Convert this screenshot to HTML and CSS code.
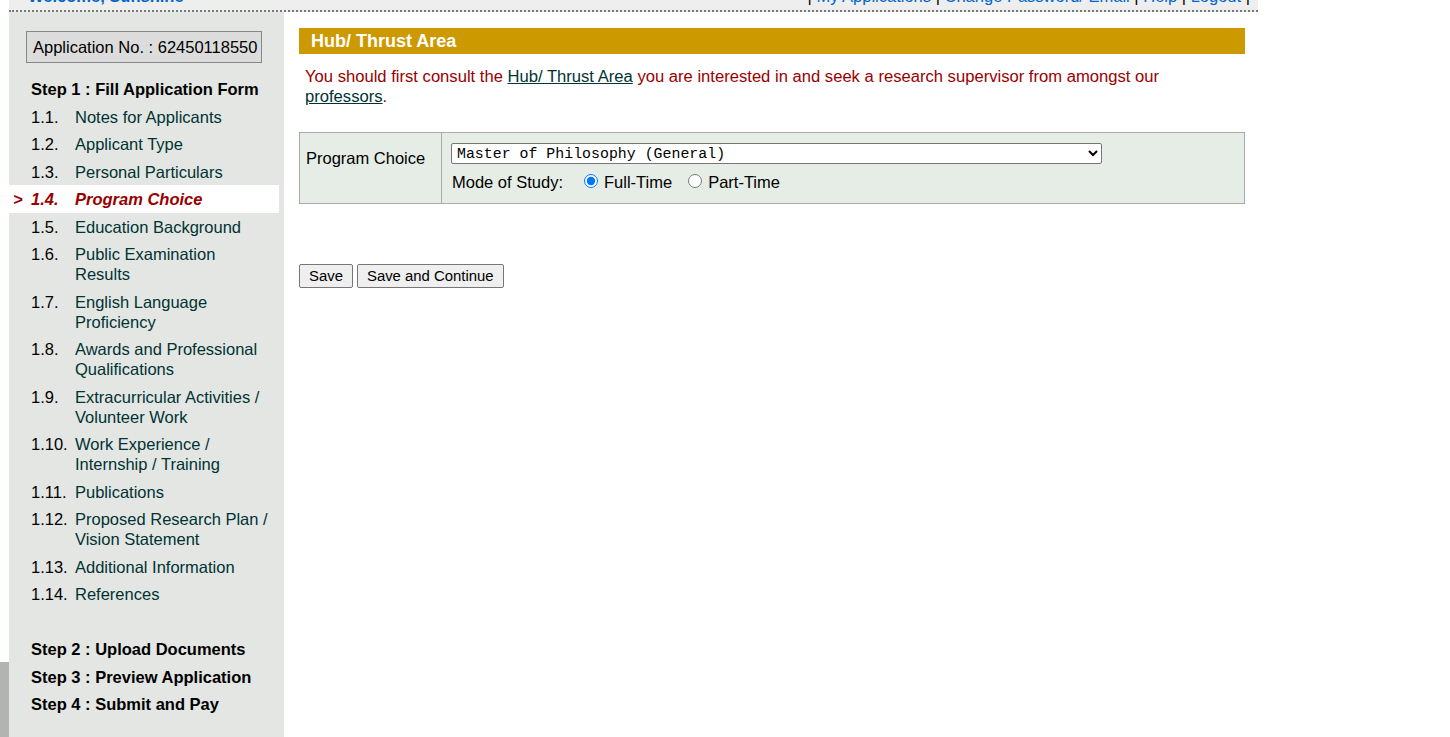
FILE: index.html
```html
<!DOCTYPE html>
<html lang="en">
<head>
<meta charset="utf-8">
<title>Program Choice</title>
<link rel="stylesheet" href="styles.css">
</head>
<body>
<div class="page">
  <div class="topbar">
    <span class="welcome">Welcome, Sunshine</span>
    <span class="toplinks">| <a href="#">My Applications</a> | <a href="#">Change Password/ Email</a> | <a href="#">Help</a> | <a href="#">Logout</a> |</span>
  </div>
  <div class="layout">
    <aside class="sidebar">
      <div class="appno">Application No. : 62450118550</div>
      <ul class="steps">
        <li class="step">Step 1 : Fill Application Form</li>
        <li class="item"><span class="mk"></span><span class="num">1.1.</span><a href="#">Notes for Applicants</a></li>
        <li class="item"><span class="mk"></span><span class="num">1.2.</span><a href="#">Applicant Type</a></li>
        <li class="item"><span class="mk"></span><span class="num">1.3.</span><a href="#">Personal Particulars</a></li>
        <li class="item active"><span class="mk">&gt;</span><span class="num">1.4.</span><a href="#">Program Choice</a></li>
        <li class="item"><span class="mk"></span><span class="num">1.5.</span><a href="#">Education Background</a></li>
        <li class="item"><span class="mk"></span><span class="num">1.6.</span><a href="#">Public Examination Results</a></li>
        <li class="item"><span class="mk"></span><span class="num">1.7.</span><a href="#">English Language Proficiency</a></li>
        <li class="item"><span class="mk"></span><span class="num">1.8.</span><a href="#">Awards and Professional Qualifications</a></li>
        <li class="item"><span class="mk"></span><span class="num">1.9.</span><a href="#">Extracurricular Activities / Volunteer Work</a></li>
        <li class="item"><span class="mk"></span><span class="num">1.10.</span><a href="#">Work Experience / Internship / Training</a></li>
        <li class="item"><span class="mk"></span><span class="num">1.11.</span><a href="#">Publications</a></li>
        <li class="item"><span class="mk"></span><span class="num">1.12.</span><a href="#">Proposed Research Plan / Vision Statement</a></li>
        <li class="item"><span class="mk"></span><span class="num">1.13.</span><a href="#">Additional Information</a></li>
        <li class="item"><span class="mk"></span><span class="num">1.14.</span><a href="#">References</a></li>
        <li class="spacer"></li>
        <li class="step">Step 2 : Upload Documents</li>
        <li class="step">Step 3 : Preview Application</li>
        <li class="step">Step 4 : Submit and Pay</li>
      </ul>
    </aside>
    <main class="main">
      <h1 class="title">Hub/ Thrust Area</h1>
      <p class="intro">You should first consult the <a href="#">Hub/ Thrust Area</a> you are interested in and seek a research supervisor from amongst our <a href="#">professors</a>.</p>
      <table class="form">
        <tr>
          <td class="label">Program Choice</td>
          <td class="field">
            <select class="prog">
              <option>Master of Philosophy (General)</option>
            </select>
            <div class="mode">
              <span class="mode-label">Mode of Study:</span>
              <label class="opt"><input type="radio" name="mode" checked>Full-Time</label>
              <label class="opt"><input type="radio" name="mode">Part-Time</label>
            </div>
          </td>
        </tr>
      </table>
      <div class="actions">
        <button type="button" class="btn">Save</button>
        <button type="button" class="btn">Save and Continue</button>
      </div>
    </main>
  </div>
</div>
</body>
</html>
```

FILE: styles.css
```css
html, body {
  margin: 0;
  padding: 0;
}
body {
  font-family: "Liberation Sans", Arial, sans-serif;
  font-size: 16.5px;
  color: #000;
  background: #fff linear-gradient(#b3b3b3, #b3b3b3) no-repeat 0 662px / 9px 100px;
  height: 737px;
  overflow: hidden;
}
a {
  color: #003333;
}
.page {
  margin-left: 9px;
  width: 1249px;
}
.topbar {
  margin-top: -14px;
  height: 24px;
  line-height: 20px;
  background: #eeeeee;
  border-bottom: 2px dotted #777;
  display: flex;
  justify-content: space-between;
  padding: 0 8px 0 19px;
  box-sizing: content-box;
}
.welcome {
  color: #0066cc;
  font-weight: bold;
}
.toplinks a {
  color: #0066cc;
  text-decoration: none;
}
.layout {
  display: flex;
  align-items: stretch;
}
.sidebar {
  width: 275px;
  flex: none;
  background: #e4e6e3;
  padding: 19px 0 30px;
  min-height: 690px;
  box-sizing: border-box;
}
.appno {
  margin-left: 17px;
  width: 236px;
  height: 32px;
  box-sizing: border-box;
  border: 1px solid #888;
  background: #dcdcdc;
  line-height: 30px;
  padding-left: 6px;
  white-space: nowrap;
}
.steps {
  list-style: none;
  margin: 12px 0 0;
  padding: 0;
}
.steps li {
  line-height: 20px;
  padding: 4px 0 3.5px;
}
.step {
  font-weight: bold;
  padding-left: 22px !important;
}
.item {
  display: grid;
  grid-template-columns: 18px 44px 197px;
  padding-left: 4px !important;
  width: 270px;
  box-sizing: border-box;
}
.item a {
  text-decoration: none;
  color: #003333;
}
.item.active {
  background: #fff;
  color: #990000;
  font-weight: bold;
  font-style: italic;
}
.item.active a {
  color: #990000;
}
.spacer {
  height: 20px;
}
.main {
  flex: 1;
  padding: 16px 13px 0 15px;
}
.title {
  margin: 0;
  background: #cc9900;
  color: #fff;
  font-size: 18px;
  font-weight: bold;
  height: 26px;
  line-height: 26px;
  padding-left: 12px;
}
.intro {
  margin: 13px 0 0;
  padding-left: 6px;
  padding-right: 60px;
  line-height: 20px;
  font-size: 16.63px;
  color: #990000;
}
.form {
  margin-top: 25px;
  width: 946px;
  border-collapse: collapse;
  border: 1px solid #aaa;
  background: #e6ede6;
}
.form td {
  vertical-align: top;
}
.label {
  width: 142px;
  box-sizing: border-box;
  padding: 15px 6px 0;
  line-height: 20px;
  border-right: 1px solid #aaa;
}
.field {
  padding: 10px 9px 11px 9px;
}
.prog {
  width: 651px;
  height: 21px;
  font-family: "Liberation Mono", "Courier New", monospace;
  font-size: 14.9px;
  border: 1px solid #767676;
  border-radius: 2px;
  background: #fff;
  padding: 0 1px;
  display: block;
}
.mode {
  margin-top: 8px;
  line-height: 20px;
  display: flex;
  align-items: center;
  padding-left: 1px;
}
.mode-label {
  margin-right: 21px;
}
.opt {
  display: inline-flex;
  align-items: center;
  margin-right: 16px;
}
.opt input {
  width: 14px;
  height: 14px;
  margin: 0 6px 2px 0;
}
.actions {
  margin-top: 60px;
  display: flex;
  gap: 4px;
}
.btn {
  font-family: "Liberation Sans", Arial, sans-serif;
  font-size: 14.9px;
  height: 24px;
  padding: 0 9px;
  background: #efefef;
  border: 1px solid #767676;
  border-radius: 2px;
  color: #000;
}
```
